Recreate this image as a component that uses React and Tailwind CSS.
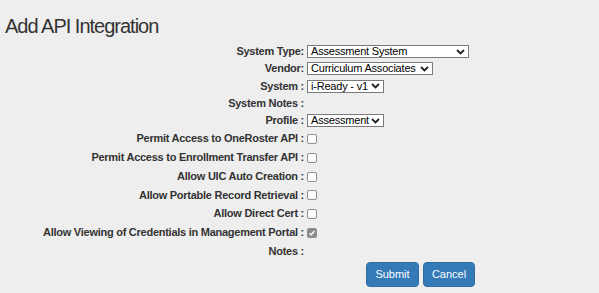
import React from "react";

const font = { fontFamily: '"Liberation Sans", Arial, sans-serif' };

function Chevron() {
  return (
    <svg width="9" height="6" viewBox="0 0 9 6" className="shrink-0">
      <path d="M1 1 L4.5 4.5 L8 1" fill="none" stroke="#222" strokeWidth="1.8" />
    </svg>
  );
}

function Select({ value, w }) {
  return (
    <div className={`flex h-[13px] items-center justify-between border border-[#7a7a7a] bg-white pl-[3px] pr-[3px] ${w}`}>
      <span className="whitespace-nowrap text-[11px] leading-none tracking-[-0.2px] text-black">{value}</span>
      <Chevron />
    </div>
  );
}

function Check({ checked }) {
  if (checked) {
    return (
      <div className="flex h-[10px] w-[10px] items-center justify-center rounded-[2px] border border-[#8c8c8c] bg-[#8c8c8c]">
        <svg width="8" height="8" viewBox="0 0 8 8">
          <path d="M1.5 4.2 L3.2 5.8 L6.5 2" fill="none" stroke="#fff" strokeWidth="1.4" />
        </svg>
      </div>
    );
  }
  return <div className="h-[10px] w-[10px] rounded-[2px] border border-[#8f8f8f] bg-white" />;
}

function Row({ label, h, children }) {
  return (
    <div className={`flex items-center ${h}`}>
      <div className="w-[304px] shrink-0 whitespace-nowrap text-right text-[11px] font-bold leading-none tracking-[-0.26px] text-[#333]">
        {label}
      </div>
      <div className="ml-[3px] flex items-center">{children}</div>
    </div>
  );
}

export default function App() {
  return (
    <div className="h-[293px] w-[599px] overflow-hidden bg-[#eeeeee]" style={font}>
      <div className="pl-[5px] pt-[15px]">
        <div className="h-[22px] text-[20px] leading-[22px] tracking-[-1px] text-[#333]">Add API Integration</div>
      </div>
      <div className="mt-[6px] flex flex-col">
        <Row label="System Type:" h="h-[17px]">
          <Select value="Assessment System" w="w-[162px]" />
        </Row>
        <Row label="Vendor:" h="h-[17px]">
          <Select value="Curriculum Associates" w="w-[126px]" />
        </Row>
        <Row label="System :" h="h-[18px]">
          <Select value="i-Ready - v1" w="w-[77px]" />
        </Row>
        <Row label="System Notes :" h="h-[17px]" />
        <Row label="Profile :" h="h-[17px]">
          <Select value="Assessment" w="w-[77px]" />
        </Row>
        <Row label="Permit Access to OneRoster API :" h="h-[19px]">
          <Check />
        </Row>
        <Row label="Permit Access to Enrollment Transfer API :" h="h-[19px]">
          <Check />
        </Row>
        <Row label="Allow UIC Auto Creation :" h="h-[19px]">
          <Check />
        </Row>
        <Row label="Allow Portable Record Retrieval :" h="h-[18px]">
          <Check />
        </Row>
        <Row label="Allow Direct Cert :" h="h-[19px]">
          <Check />
        </Row>
        <Row label="Allow Viewing of Credentials in Management Portal :" h="h-[19px]">
          <Check checked />
        </Row>
        <Row label="Notes :" h="h-[18px]" />
        <div className="ml-[366px] mt-[2px] flex gap-[4px]">
          <button className="h-[25px] w-[53px] rounded-[4px] border border-[#2e6da4] bg-[#337ab7] text-[11px] text-white">
            Submit
          </button>
          <button className="h-[25px] w-[52px] rounded-[4px] border border-[#2e6da4] bg-[#337ab7] text-[11px] text-white">
            Cancel
          </button>
        </div>
      </div>
    </div>
  );
}
